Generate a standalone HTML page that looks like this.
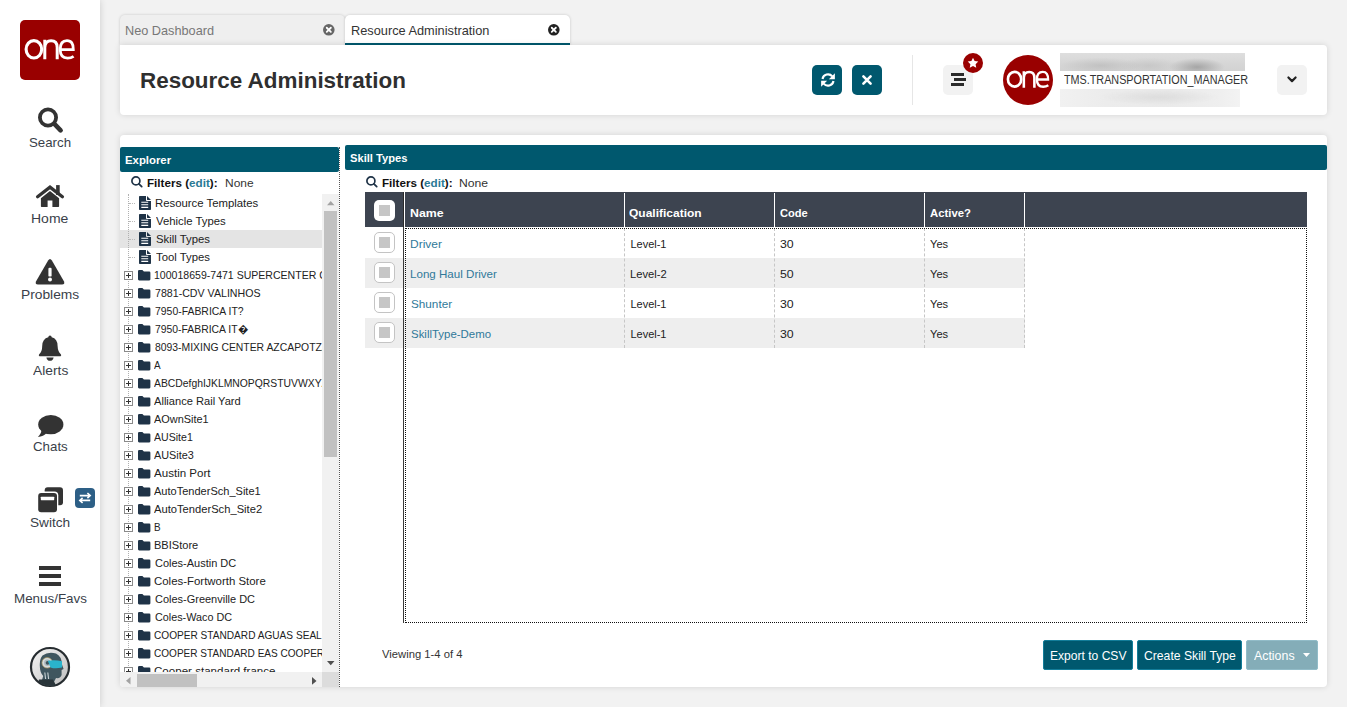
<!DOCTYPE html>
<html>
<head>
<meta charset="utf-8">
<title>Resource Administration</title>
<style>
*{box-sizing:border-box;margin:0;padding:0}
html,body{width:1347px;height:707px;overflow:hidden}
body{background:#f2f2f2;font-family:"Liberation Sans",sans-serif;color:#333;position:relative;font-size:11px}
.abs{position:absolute}
.t{position:absolute;white-space:nowrap;line-height:1;transform-origin:0 0}
svg{position:absolute;overflow:visible}
/* sidebar */
#side{position:absolute;left:0;top:0;width:100px;height:707px;background:#fff;box-shadow:0 0 7px rgba(0,0,0,.16)}
.nv{font-size:13px;color:#3a3f4a}
/* tabs */
.tab{position:absolute;top:15px;height:30px;border-radius:5px 5px 0 0;font-size:13px}
#tab1{left:120px;width:225px;background:#efefef;box-shadow:0 0 3px rgba(0,0,0,.18);color:#777}
#tab2{left:345px;width:225px;background:#fff;box-shadow:0 0 3px rgba(0,0,0,.18);color:#333}
#tab2 u{position:absolute;left:0;bottom:0;width:225px;height:2px;background:#00586e}
#hdr{position:absolute;left:120px;top:45px;width:1207px;height:70px;background:#fff;border-radius:0 4px 4px 4px;box-shadow:0 0 6px rgba(0,0,0,.13)}
#main{position:absolute;left:120px;top:135px;width:1207px;height:552px;background:#fff;border-radius:4px;box-shadow:0 0 6px rgba(0,0,0,.13)}
.phead{position:absolute;background:#00586e;color:#fff;font-weight:bold;font-size:11px;border-radius:2px}
.btn{position:absolute;border-radius:5px}
/* tree */
#tree{position:absolute;left:120px;top:194px;width:202px;height:478px;overflow:hidden}
.tr{position:absolute;left:0;height:18px;width:202px;font-size:11px;color:#222;white-space:nowrap;overflow:hidden}

.tr .fi{left:19px;top:2px;width:12px;height:14px}
.tr .fo{left:18.200px;top:3.600px;width:12.400px;height:10.500px}
.tr .pl{z-index:2;position:absolute;left:4px;top:5px;width:9px;height:9px;border:1px solid #8a8a8a;background:#fff}
.tr .pl:before{content:"";position:absolute;left:1px;top:3px;width:5px;height:1px;background:#333}
.tr .pl:after{content:"";position:absolute;left:3px;top:1px;width:1px;height:5px;background:#333}
.tr .el{position:absolute;left:9px;top:9px;width:6px;height:0;border-top:1px dotted #bbb}
/* grid */
.row{position:absolute;left:365px;width:660px;height:30px}
.cell{position:absolute;font-size:11px;line-height:1;white-space:nowrap}
[id^=tx_c]{color:#222}
.lnk{color:#30799a}
.cb{position:absolute;width:21px;height:21px;border:1px solid #c4c4c4;border-radius:5px;background:#fff}
.cb i{position:absolute;left:4px;top:4px;width:11px;height:11px;background:#c6c6c6}
.vd{position:absolute;top:228px;height:120px;width:0;border-left:1px dashed #c6c6c6}
.hs{position:absolute;top:193px;height:34px;width:1px;background:#fff}
.fb{position:absolute;top:640px;height:29.5px;border-radius:2px;color:#fff;font-size:13px;background:#00586e;border:1px solid #137d99}
</style>
</head>
<body>
<svg width="0" height="0" style="display:none">
<defs>
<g id="file"><path d="M0 0.8Q0 0 .8 0H7V4.2Q7 5 7.8 5H12V13.2Q12 14 11.2 14H.8Q0 14 0 13.2Z M8 0L12 4H8.4Q8 4 8 3.6Z" fill="#1f3347"/><path d="M2.300 6.200h6.900M2.300 8.800h6.900M2.300 11.400h6.900" stroke="#fff" stroke-width="1.100" fill="none"/></g>
<g id="fold"><path d="M0 1.2Q0 0 1.2 0H4.6L6.2 1.6H11.8Q13 1.6 13 2.8V9.8Q13 11 11.8 11H1.2Q0 11 0 9.8Z" fill="#1f3347"/></g>
<g id="mag"><circle cx="4.900" cy="4.900" r="4" fill="none" stroke="#1f3347" stroke-width="1.700"/><path d="M7.900 7.900L10.700 10.600" stroke="#1f3347" stroke-width="1.800" stroke-linecap="round"/></g>
<g id="xc"><circle cx="6.5" cy="6.5" r="6.5"/><path d="M4.2 4.2L8.8 8.8M8.8 4.2L4.2 8.8" stroke="#fff" stroke-width="2" stroke-linecap="round"/></g>
<g id="one"><ellipse cx="33.900" cy="49.300" rx="7.800" ry="8.700" stroke-width="3.100"/><path d="M44.800 39.800V59.200M44.800 47.500Q45.100 40.800 51.100 40.800Q57.200 40.800 57.200 47.500V59.200" stroke-width="3"/><path d="M60.400 49.600H73.300Q73.500 40.700 67 40.700Q60.200 40.700 60.200 49.600Q60.200 58.100 67.600 58.100Q71 58.100 73.600 56.300" stroke-width="2.800"/></g>
</defs>
</svg>

<div id="side"></div>

<!-- sidebar -->
<div class="abs" style="left:20px;top:20px;width:60px;height:60px;border-radius:5px;background:#990000"></div>
<svg style="left:20px;top:20px;width:60px;height:60px" viewBox="20 20 60 60" fill="none" stroke="#fff"><use href="#one"/></svg>
<svg style="left:36px;top:105px;width:30px;height:30px" viewBox="36 105 30 30"><circle cx="48" cy="117.5" r="8.1" fill="none" stroke="#333" stroke-width="3.8"/><path d="M54.6 124.2L60.6 130.3" stroke="#333" stroke-width="4.6" stroke-linecap="round"/></svg>
<span class="t nv" id="tx_s1" style="left:29.03px;transform:scaleX(1.0203);top:136px">Search</span>
<svg style="left:35px;top:184px;width:30px;height:24px" viewBox="35 184 30 24" fill="#333"><path d="M37.6 196.7L50 187.1L62.4 196.7" fill="none" stroke="#333" stroke-width="3.3" stroke-linecap="round" stroke-linejoin="miter"/><path d="M56.1 185.1H59.7V195H56.1Z"/><path d="M50 191.1L40.9 198.2V206.3Q40.9 207 41.6 207H47.6V200.600H52.400V207H58.400Q59.100 207 59.100 206.300V198.200Z"/></svg>
<span class="t nv" id="tx_s2" style="left:31.42px;transform:scaleX(1.0758);top:212px">Home</span>
<svg style="left:35px;top:258px;width:30px;height:28px" viewBox="35 258 30 28"><path d="M48.1 260.6Q50 257.6 51.9 260.6L63.9 281.2Q65.3 284.4 62 284.4H38Q34.7 284.4 36.1 281.2Z" fill="#333"/><rect x="48.400" y="267.800" width="3.200" height="8.800" rx="1.200" fill="#fff"/><circle cx="50" cy="279.600" r="2" fill="#fff"/></svg>
<span class="t nv" id="tx_s3" style="left:20.94px;transform:scaleX(1.0598);top:288px">Problems</span>
<svg style="left:36px;top:334px;width:28px;height:28px" viewBox="36 334 28 28" fill="#333"><path d="M50 335.4Q51.6 335.4 51.7 337.2Q57.6 338.6 57.6 346Q57.800 351.600 60.800 354.200Q61.800 355.400 60.600 356.200H39.400Q38.200 355.400 39.200 354.200Q42.200 351.600 42.200 346Q42.4 338.6 48.3 337.2Q48.4 335.4 50 335.4Z"/><path d="M46.400 357.400H53.600Q53 360.800 50 360.800Q47 360.800 46.400 357.400Z"/></svg>
<span class="t nv" id="tx_s4" style="left:32.70px;transform:scaleX(1.0626);top:364px">Alerts</span>
<svg style="left:36px;top:413px;width:30px;height:26px" viewBox="36 413 30 26" fill="#333"><ellipse cx="50.8" cy="424.6" rx="12.6" ry="9.6"/><path d="M41.5 429.5Q41.3 434 37.9 436.9Q43.5 436.8 46.8 432.8Z"/></svg>
<span class="t nv" id="tx_s5" style="left:32.83px;transform:scaleX(1.0229);top:440px">Chats</span>
<svg style="left:36px;top:486px;width:30px;height:28px" viewBox="36 486 30 28"><rect x="44.7" y="487.3" width="18.3" height="18" rx="3" fill="#333"/><rect x="36.900" y="491.600" width="21.400" height="21.800" rx="4" fill="#fff"/><rect x="38.200" y="492.900" width="18.800" height="19.300" rx="3" fill="#333"/><rect x="40.8" y="496.7" width="13.4" height="3.5" rx=".6" fill="#fff"/></svg>
<div class="abs" style="left:75px;top:488px;width:20px;height:20px;border-radius:4px;background:#2d5f86"></div>
<svg style="left:75px;top:488px;width:20px;height:20px" viewBox="0 0 20 20" fill="none" stroke="#fff" stroke-width="1.6"><path d="M4.8 7.6H15M12.4 5L15.2 7.6L12.4 10.2" /><path d="M15.2 12.4H5M7.6 9.8L4.8 12.4L7.6 15"/></svg>
<span class="t nv" id="tx_s6" style="left:29.91px;transform:scaleX(1.0503);top:516px">Switch</span>
<div class="abs" style="left:39px;top:566.4px;width:22px;height:3.7px;background:#333"></div>
<div class="abs" style="left:39px;top:574.3px;width:22px;height:3.7px;background:#333"></div>
<div class="abs" style="left:39px;top:582.1px;width:22px;height:3.7px;background:#333"></div>
<span class="t nv" id="tx_s7" style="left:13.67px;transform:scaleX(1.0296);top:592px">Menus/Favs</span>
<svg style="left:29px;top:646px;width:42px;height:42px" viewBox="29 646 42 42"><defs><linearGradient id="avg" x1="0" y1="0" x2="1" y2="1"><stop offset="0" stop-color="#f6f6f6"/><stop offset="1" stop-color="#bdbdbd"/></linearGradient><clipPath id="avc"><circle cx="50" cy="667" r="18.600"/></clipPath></defs><circle cx="50" cy="667" r="19" fill="url(#avg)" stroke="#262c30" stroke-width="2.200"/><g clip-path="url(#avc)"><path d="M42.500 655.500Q48 651.500 56 653.500Q61.500 656 62 664.500L63.600 669L61.600 670L61.600 675Q60.500 678.800 56 678L54 682L58 688H38L42 680L43.200 676Q39.500 672 39.800 664Q39.800 658.500 42.500 655.500Z" fill="#3f565f"/><path d="M39 679.500L53 679.500L57 688H37Z" fill="#2a353a"/><circle cx="47.200" cy="662.800" r="5.300" fill="#d5dcde" stroke="#a8925c" stroke-width=".700"/><circle cx="47.400" cy="662.800" r="3.300" fill="#aeb9bd"/><circle cx="47.600" cy="662.800" r="1.900" fill="#3f565f"/><path d="M47.800 660.800Q54 659.300 62 661.200V667.600Q55 669.200 50.500 667.400Z" fill="#2ab3cc"/><path d="M44.800 672.500L45.600 679M47.800 672.500L48.600 679" stroke="#c9d2d5" stroke-width="1.100"/></g></svg>


<!-- tabs -->
<div class="tab" id="tab1"><span class="t" id="tx_tab1" style="left:5.32px;transform:scaleX(0.9782);top:9px">Neo Dashboard</span><svg style="left:203.2px;top:9.2px;width:11.6px;height:11.6px" viewBox="0 0 13 13" fill="#666"><use href="#xc"/></svg></div>
<div class="tab" id="tab2"><span class="t" id="tx_tab2" style="left:5.72px;transform:scaleX(0.9820);top:9px">Resource Administration</span><svg style="left:203.2px;top:9.2px;width:11.6px;height:11.6px" viewBox="0 0 13 13" fill="#222"><use href="#xc"/></svg><u></u></div>
<div id="hdr"></div>
<span class="t" id="tx_title" style="left:140.07px;transform:scaleX(1.0194);top:70.4px;font-size:22px;font-weight:bold;color:#2f2f2f">Resource Administration</span>

<div class="btn" style="left:812px;top:65px;width:30px;height:30px;background:#00586e"></div>
<svg style="left:819.500px;top:71.700px;width:16px;height:16px" viewBox="0 0 16 16" fill="none" stroke="#fff" stroke-width="2.100"><path d="M2.500 7A5.600 5.600 0 0 1 12.300 4.400"/><path d="M13.500 9A5.600 5.600 0 0 1 3.700 11.600"/><path d="M14.900 1.300V7.300H8.900Z" fill="#fff" stroke="none"/><path d="M1.100 14.700V8.700H7.100Z" fill="#fff" stroke="none"/></svg>
<div class="btn" style="left:852px;top:65px;width:30px;height:30px;background:#00586e"></div>
<svg style="left:862px;top:75px;width:10px;height:10px" viewBox="0 0 10 10" stroke="#fff" stroke-width="2.600" stroke-linecap="round"><path d="M1.4 1.4L8.6 8.6M8.6 1.4L1.4 8.6"/></svg>
<div class="abs" style="left:912px;top:55px;width:1px;height:50px;background:#e6e6e6"></div>
<div class="btn" style="left:943px;top:65px;width:30px;height:30px;background:#f2f2f2"></div>
<div class="abs" style="left:951px;top:73px;width:13px;height:2.6px;background:#2b2b2b"></div>
<div class="abs" style="left:953.6px;top:78.2px;width:12.4px;height:2.6px;background:#2b2b2b"></div>
<div class="abs" style="left:951px;top:83.4px;width:13px;height:2.6px;background:#2b2b2b"></div>
<div class="abs" style="left:963px;top:53px;width:20px;height:20px;border-radius:10px;background:#990000"></div>
<svg style="left:967px;top:57px;width:12px;height:12px" viewBox="0 0 24 24"><path d="M12 1.5l3.2 6.7 7.3 1-5.3 5.1 1.3 7.3L12 18.1l-6.5 3.5 1.300-7.300L1.500 9.200l7.300-1z" fill="#fff"/></svg>
<div class="abs" style="left:1003px;top:55px;width:50px;height:50px;border-radius:25px;background:#990000"></div>
<svg style="left:1003px;top:55px;width:50px;height:50px" viewBox="20.300 20.800 58.800 58.800" fill="none" stroke="#fff"><use href="#one"/></svg>
<div class="abs" style="left:1060px;top:53px;width:185px;height:17.500px;background:radial-gradient(ellipse 28px 9px at 74% 78%,rgba(150,150,150,.75),rgba(150,150,150,0) 100%),radial-gradient(ellipse 40px 8px at 22% 70%,rgba(170,170,170,.45),rgba(170,170,170,0) 100%),radial-gradient(ellipse 30px 8px at 48% 70%,rgba(175,175,175,.35),rgba(175,175,175,0) 100%),linear-gradient(180deg,#dedede,#d6d6d6 60%,#d2d2d2)"></div>
<span class="t" id="tx_tms" style="left:1063.78px;transform:scaleX(0.8991);top:74px;font-size:12px;color:#333">TMS.TRANSPORTATION_MANAGER</span>
<div class="abs" style="left:1060px;top:89.300px;width:180px;height:18.200px;background:radial-gradient(ellipse 60px 8px at 55% 45%,rgba(215,215,215,.7),rgba(215,215,215,0) 100%),linear-gradient(90deg,#f1f1f1 0%,#ececec 25%,#eaeaea 60%,#efefef 90%,#f3f3f3 100%)"></div>
<div class="btn" style="left:1277px;top:65px;width:30px;height:30px;background:#f2f2f2"></div>
<svg style="left:1287px;top:76px;width:10px;height:7px" viewBox="0 0 10 7" fill="none" stroke="#222" stroke-width="2.2" stroke-linecap="round" stroke-linejoin="round"><path d="M1.400 1.500L5 5.100L8.600 1.500"/></svg>


<div id="main"></div>
<!-- explorer -->
<div class="phead" style="left:120px;top:147px;width:219px;height:25px"><span class="t" id="tx_exp" style="left:4.73px;transform:scaleX(1.0331);top:8px">Explorer</span></div>
<div class="abs" style="left:339px;top:147px;width:0;height:540px;border-left:1px dotted #555"></div>
<svg style="left:131.200px;top:176px;width:12px;height:12px" viewBox="0 0 12 12"><use href="#mag"/></svg>
<span class="t" id="tx_f1" style="left:146.91px;transform:scaleX(1.0595);top:178px;font-weight:bold;color:#111">Filters (<span style="color:#2a7a95">edit</span>):</span>
<span class="t" id="tx_n1" style="left:224.61px;transform:scaleX(1.0869);top:178px">None</span>
<div id="tree">
<div class="abs" style="left:8px;top:0;width:0;height:478px;border-left:1px dotted #b0b0b0;z-index:1"></div>
<div class="tr" style="top:0px"><i class="el"></i><svg class="fi" viewBox="0 0 12 14"><use href="#file"/></svg><span class="t" id="tx_t0" style="left:35.17px;transform:scaleX(1.0319);top:4px">Resource Templates</span></div>
<div class="tr" style="top:18px"><i class="el"></i><svg class="fi" viewBox="0 0 12 14"><use href="#file"/></svg><span class="t" id="tx_t1" style="left:36.20px;transform:scaleX(1.0300);top:4px">Vehicle Types</span></div>
<div class="tr" style="top:36px;background:#e4e4e4"><i class="el"></i><svg class="fi" viewBox="0 0 12 14"><use href="#file"/></svg><span class="t" id="tx_t2" style="left:35.69px;transform:scaleX(1.0300);top:4px">Skill Types</span></div>
<div class="tr" style="top:54px"><i class="el"></i><svg class="fi" viewBox="0 0 12 14"><use href="#file"/></svg><span class="t" id="tx_t3" style="left:35.94px;transform:scaleX(1.0300);top:4px">Tool Types</span></div>
<div class="tr" style="top:72px"><i class="pl"></i><svg class="fo" viewBox="0 0 13 11"><use href="#fold"/></svg><span class="t" id="tx_t4" style="left:34.38px;transform:scaleX(0.9583);top:4px">100018659-7471 SUPERCENTER CENTRO</span></div>
<div class="tr" style="top:90px"><i class="pl"></i><svg class="fo" viewBox="0 0 13 11"><use href="#fold"/></svg><span class="t" id="tx_t5" style="left:34.52px;transform:scaleX(0.9663);top:4px">7881-CDV VALINHOS</span></div>
<div class="tr" style="top:108px"><i class="pl"></i><svg class="fo" viewBox="0 0 13 11"><use href="#fold"/></svg><span class="t" id="tx_t6" style="left:34.53px;transform:scaleX(0.9477);top:4px">7950-FABRICA IT?</span></div>
<div class="tr" style="top:126px"><i class="pl"></i><svg class="fo" viewBox="0 0 13 11"><use href="#fold"/></svg><span class="t" id="tx_t7" style="left:34.53px;transform:scaleX(0.9441);top:4px">7950-FABRICA IT�</span></div>
<div class="tr" style="top:144px"><i class="pl"></i><svg class="fo" viewBox="0 0 13 11"><use href="#fold"/></svg><span class="t" id="tx_t8" style="left:34.53px;transform:scaleX(0.9445);top:4px">8093-MIXING CENTER AZCAPOTZALCO</span></div>
<div class="tr" style="top:162px"><i class="pl"></i><svg class="fo" viewBox="0 0 13 11"><use href="#fold"/></svg><span class="t" id="tx_t9" style="left:34.30px;transform:scaleX(0.9000);top:4px">A</span></div>
<div class="tr" style="top:180px"><i class="pl"></i><svg class="fo" viewBox="0 0 13 11"><use href="#fold"/></svg><span class="t" id="tx_t10" style="left:34.30px;transform:scaleX(0.9420);top:4px">ABCDefghIJKLMNOPQRSTUVWXYZ</span></div>
<div class="tr" style="top:198px"><i class="pl"></i><svg class="fo" viewBox="0 0 13 11"><use href="#fold"/></svg><span class="t" id="tx_t11" style="left:34.30px;transform:scaleX(1.0111);top:4px">Alliance Rail Yard</span></div>
<div class="tr" style="top:216px"><i class="pl"></i><svg class="fo" viewBox="0 0 13 11"><use href="#fold"/></svg><span class="t" id="tx_t12" style="left:34.30px;transform:scaleX(0.9927);top:4px">AOwnSite1</span></div>
<div class="tr" style="top:234px"><i class="pl"></i><svg class="fo" viewBox="0 0 13 11"><use href="#fold"/></svg><span class="t" id="tx_t13" style="left:34.30px;transform:scaleX(0.9610);top:4px">AUSite1</span></div>
<div class="tr" style="top:252px"><i class="pl"></i><svg class="fo" viewBox="0 0 13 11"><use href="#fold"/></svg><span class="t" id="tx_t14" style="left:34.30px;transform:scaleX(0.9875);top:4px">AUSite3</span></div>
<div class="tr" style="top:270px"><i class="pl"></i><svg class="fo" viewBox="0 0 13 11"><use href="#fold"/></svg><span class="t" id="tx_t15" style="left:34.30px;transform:scaleX(1.0512);top:4px">Austin Port</span></div>
<div class="tr" style="top:288px"><i class="pl"></i><svg class="fo" viewBox="0 0 13 11"><use href="#fold"/></svg><span class="t" id="tx_t16" style="left:34.30px;transform:scaleX(1.0028);top:4px">AutoTenderSch_Site1</span></div>
<div class="tr" style="top:306px"><i class="pl"></i><svg class="fo" viewBox="0 0 13 11"><use href="#fold"/></svg><span class="t" id="tx_t17" style="left:34.30px;transform:scaleX(1.0160);top:4px">AutoTenderSch_Site2</span></div>
<div class="tr" style="top:324px"><i class="pl"></i><svg class="fo" viewBox="0 0 13 11"><use href="#fold"/></svg><span class="t" id="tx_t18" style="left:34.20px;transform:scaleX(0.9000);top:4px">B</span></div>
<div class="tr" style="top:342px"><i class="pl"></i><svg class="fo" viewBox="0 0 13 11"><use href="#fold"/></svg><span class="t" id="tx_t19" style="left:34.10px;transform:scaleX(1.0047);top:4px">BBIStore</span></div>
<div class="tr" style="top:360px"><i class="pl"></i><svg class="fo" viewBox="0 0 13 11"><use href="#fold"/></svg><span class="t" id="tx_t20" style="left:34.50px;transform:scaleX(0.9981);top:4px">Coles-Austin DC</span></div>
<div class="tr" style="top:378px"><i class="pl"></i><svg class="fo" viewBox="0 0 13 11"><use href="#fold"/></svg><span class="t" id="tx_t21" style="left:34.48px;transform:scaleX(1.0389);top:4px">Coles-Fortworth Store</span></div>
<div class="tr" style="top:396px"><i class="pl"></i><svg class="fo" viewBox="0 0 13 11"><use href="#fold"/></svg><span class="t" id="tx_t22" style="left:34.50px;transform:scaleX(0.9975);top:4px">Coles-Greenville DC</span></div>
<div class="tr" style="top:414px"><i class="pl"></i><svg class="fo" viewBox="0 0 13 11"><use href="#fold"/></svg><span class="t" id="tx_t23" style="left:34.51px;transform:scaleX(0.9819);top:4px">Coles-Waco DC</span></div>
<div class="tr" style="top:432px"><i class="pl"></i><svg class="fo" viewBox="0 0 13 11"><use href="#fold"/></svg><span class="t" id="tx_t24" style="left:34.14px;transform:scaleX(0.9188);top:4px">COOPER STANDARD AGUAS SEALING</span></div>
<div class="tr" style="top:450px"><i class="pl"></i><svg class="fo" viewBox="0 0 13 11"><use href="#fold"/></svg><span class="t" id="tx_t25" style="left:34.14px;transform:scaleX(0.9134);top:4px">COOPER STANDARD EAS COOPER</span></div>
<div class="tr" style="top:468px"><i class="pl"></i><svg class="fo" viewBox="0 0 13 11"><use href="#fold"/></svg><span class="t" id="tx_t26" style="left:34.07px;transform:scaleX(1.0515);top:4px">Cooper standard france</span></div>
</div>
<!-- scrollbars -->
<div class="abs" style="left:322px;top:194px;width:17px;height:478px;background:#f1f1f1"></div>
<div class="abs" style="left:324px;top:211px;width:13px;height:246px;background:#c1c1c1"></div>
<svg style="left:326.800px;top:200.700px;width:7.500px;height:4.300px" viewBox="0 0 9 5" preserveAspectRatio="none"><path d="M0 5L4.5 0L9 5Z" fill="#a3a3a3"/></svg>
<svg style="left:326.600px;top:661px;width:7.500px;height:4.300px" viewBox="0 0 9 5" preserveAspectRatio="none"><path d="M0 0L4.5 5L9 0Z" fill="#505050"/></svg>
<div class="abs" style="left:120px;top:672px;width:219px;height:15px;background:#f1f1f1;border-radius:0 0 0 4px"></div>
<div class="abs" style="left:322px;top:672px;width:17px;height:15px;background:#dcdcdc"></div>
<div class="abs" style="left:137px;top:674px;width:60px;height:13px;background:#c1c1c1"></div>
<svg style="left:126px;top:676.800px;width:4.500px;height:7.500px" viewBox="0 0 5 9" preserveAspectRatio="none"><path d="M5 0L0 4.5L5 9Z" fill="#a3a3a3"/></svg>
<svg style="left:312.200px;top:676.600px;width:4.500px;height:7.800px" viewBox="0 0 5 9" preserveAspectRatio="none"><path d="M0 0L5 4.5L0 9Z" fill="#505050"/></svg>

<!-- skill types -->
<div class="phead" style="left:345px;top:145px;width:982px;height:25px"><span class="t" id="tx_st" style="left:4.75px;transform:scaleX(1.0143);top:8px">Skill Types</span></div>
<svg style="left:366.200px;top:176px;width:12px;height:12px" viewBox="0 0 12 12"><use href="#mag"/></svg>
<span class="t" id="tx_f2" style="left:381.51px;transform:scaleX(1.0595);top:178px;font-weight:bold;color:#111">Filters (<span style="color:#2a7a95">edit</span>):</span>
<span class="t" id="tx_n2" style="left:459.19px;transform:scaleX(1.1071);top:178px">None</span>
<!-- grid header -->
<div class="abs" style="left:365px;top:192px;width:942px;height:35px;background:#3d4450"></div>
<div class="abs" style="left:374px;top:200px;width:21px;height:21px;background:#fff;border-radius:5px"><i style="position:absolute;left:5px;top:5px;width:11px;height:11px;background:#c6c6c6"></i></div>
<div class="hs" style="left:403px;background:#2a2a2a;top:192px;height:35px"></div><div class="hs" style="left:404px;top:192px;height:35px"></div>
<div class="hs" style="left:624px"></div><div class="hs" style="left:774px"></div><div class="hs" style="left:924px"></div><div class="hs" style="left:1024px"></div>
<span class="t" id="tx_h1" style="left:409.76px;transform:scaleX(1.1235);top:208px;font-weight:bold;color:#fff">Name</span>
<span class="t" id="tx_h2" style="left:629.45px;transform:scaleX(1.0901);top:208px;font-weight:bold;color:#fff">Qualification</span>
<span class="t" id="tx_h3" style="left:779.80px;transform:scaleX(1.0093);top:208px;font-weight:bold;color:#fff">Code</span>
<span class="t" id="tx_h4" style="left:929.74px;transform:scaleX(1.0297);top:208px;font-weight:bold;color:#fff">Active?</span>
<!-- rows -->
<div class="abs" style="left:365px;top:258px;width:660px;height:30px;background:#eeeeee"></div>
<div class="abs" style="left:365px;top:318px;width:660px;height:30px;background:#eeeeee"></div>
<div class="cb" style="left:374px;top:232px"><i></i></div>
<div class="cb" style="left:374px;top:262px"><i></i></div>
<div class="cb" style="left:374px;top:292px"><i></i></div>
<div class="cb" style="left:374px;top:322px"><i></i></div>
<div class="vd" style="left:624px"></div><div class="vd" style="left:774px"></div><div class="vd" style="left:924px"></div><div class="vd" style="left:1024px"></div>
<span class="t lnk" id="tx_c0a" style="left:410.11px;transform:scaleX(1.0903);top:239px">Driver</span>
<span class="t" id="tx_c0b" style="left:630.40px;transform:scaleX(1.0000);top:239px">Level-1</span>
<span class="t" id="tx_c0c" style="left:780.44px;transform:scaleX(1.1200);top:239px">30</span>
<span class="t" id="tx_c0d" style="left:930.35px;transform:scaleX(1.0087);top:239px">Yes</span>
<span class="t lnk" id="tx_c1a" style="left:410.15px;transform:scaleX(1.0528);top:269px">Long Haul Driver</span>
<span class="t" id="tx_c1b" style="left:630.38px;transform:scaleX(1.0203);top:269px">Level-2</span>
<span class="t" id="tx_c1c" style="left:780.44px;transform:scaleX(1.1200);top:269px">50</span>
<span class="t" id="tx_c1d" style="left:930.35px;transform:scaleX(1.0087);top:269px">Yes</span>
<span class="t lnk" id="tx_c2a" style="left:410.67px;transform:scaleX(1.0658);top:299px">Shunter</span>
<span class="t" id="tx_c2b" style="left:630.40px;transform:scaleX(1.0000);top:299px">Level-1</span>
<span class="t" id="tx_c2c" style="left:780.44px;transform:scaleX(1.1200);top:299px">30</span>
<span class="t" id="tx_c2d" style="left:930.35px;transform:scaleX(1.0087);top:299px">Yes</span>
<span class="t lnk" id="tx_c3a" style="left:410.68px;transform:scaleX(1.0395);top:329px">SkillType-Demo</span>
<span class="t" id="tx_c3b" style="left:630.40px;transform:scaleX(1.0000);top:329px">Level-1</span>
<span class="t" id="tx_c3c" style="left:780.44px;transform:scaleX(1.1200);top:329px">30</span>
<span class="t" id="tx_c3d" style="left:930.35px;transform:scaleX(1.0087);top:329px">Yes</span>
<!-- focus outline -->
<div class="abs" style="left:403px;top:227px;width:1px;height:396px;background:#3a3a3a"></div>
<div class="abs" style="left:405px;top:228px;width:902px;height:395px;border:1px dotted #111"></div>

<span class="t" id="tx_view" style="left:382.30px;transform:scaleX(1.0217);top:649px">Viewing 1-4 of 4</span>
<div class="fb" style="left:1043px;width:90px"><span class="t" id="tx_b1" style="left:6.07px;transform:scaleX(0.9280);top:8px">Export to CSV</span></div>
<div class="fb" style="left:1137px;width:105px"><span class="t" id="tx_b2" style="left:5.90px;transform:scaleX(0.9364);top:8px">Create Skill Type</span></div>
<div class="fb" style="left:1246px;width:72px;background:#84adb8;border-color:#92bcc8"><span class="t" id="tx_b3" style="left:6.80px;transform:scaleX(0.9515);top:8px">Actions</span><svg style="left:56px;top:12px;width:7px;height:4px" viewBox="0 0 7 4"><path d="M0 0H7L3.5 4Z" fill="#fff"/></svg></div>
</body>
</html>
